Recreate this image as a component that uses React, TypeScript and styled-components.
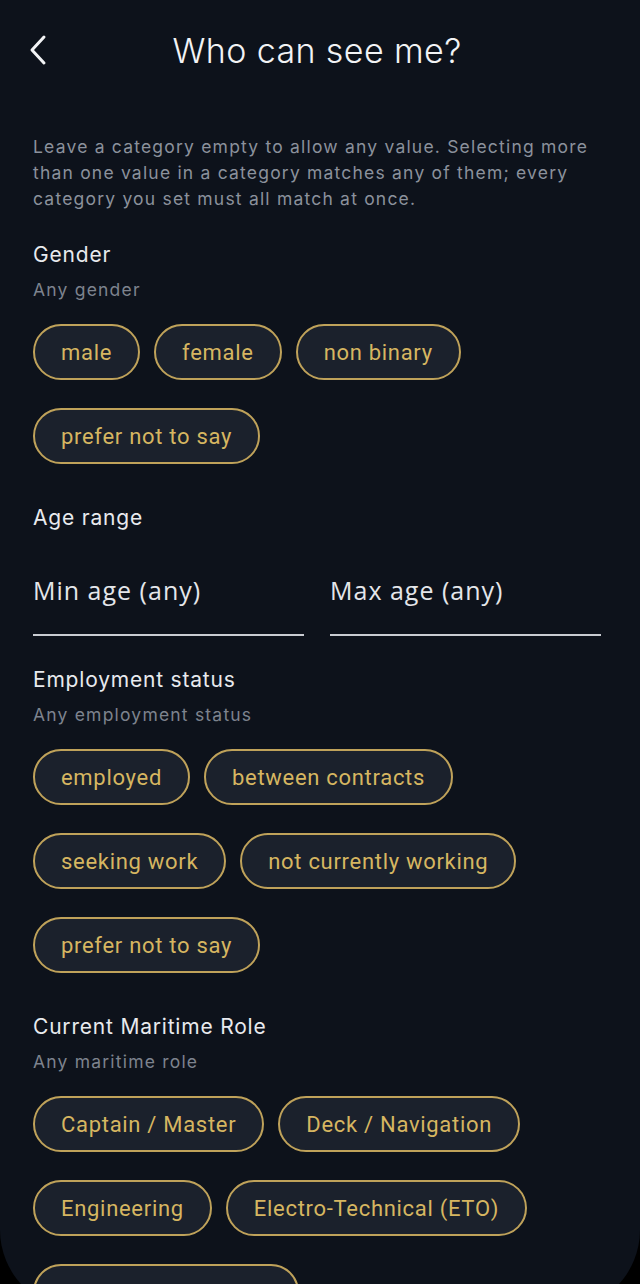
import styled, { createGlobalStyle } from 'styled-components';

const GlobalStyle = createGlobalStyle`
  html, body {
    margin: 0;
    padding: 0;
    background: #000;
    height: 1284px;
    overflow: hidden;
  }
  * { box-sizing: border-box; }
`;

const genders = ['male', 'female', 'non binary', 'prefer not to say'];
const employment = ['employed', 'between contracts', 'seeking work', 'not currently working', 'prefer not to say'];
const roles = ['Captain / Master', 'Deck / Navigation', 'Engineering', 'Electro-Technical (ETO)', 'Interior / Hospitality'];

export default function App() {
  return (
    <>
      <GlobalStyle />
      <Screen>
        <Header>
          <BackButton aria-label="Back">
            <svg width="20" height="32" viewBox="0 0 20 32" fill="none">
              <polyline points="16,3 4,16 16,29" stroke="#f2f3f5" strokeWidth="3" strokeLinecap="round" strokeLinejoin="round" />
            </svg>
          </BackButton>
          <Title>Who can see me?</Title>
        </Header>

        <Content>
          <Intro>
            Leave a category empty to allow any value. Selecting more than one value in a category
            matches any of them; every category you set must all match at once.
          </Intro>

          <Section>
            <Heading>Gender</Heading>
            <Hint>Any gender</Hint>
            <ChipWrap>
              {genders.map(g => <Chip key={g}>{g}</Chip>)}
            </ChipWrap>
          </Section>

          <Section>
            <Heading>Age range</Heading>
            <AgeRow>
              <AgeInput placeholder="Min age (any)" />
              <AgeInput placeholder="Max age (any)" />
            </AgeRow>
          </Section>

          <Section $tight>
            <Heading>Employment status</Heading>
            <Hint>Any employment status</Hint>
            <ChipWrap>
              {employment.map(e => <Chip key={e}>{e}</Chip>)}
            </ChipWrap>
          </Section>

          <Section>
            <Heading>Current Maritime Role</Heading>
            <Hint>Any maritime role</Hint>
            <ChipWrap>
              {roles.map(r => <Chip key={r}>{r}</Chip>)}
            </ChipWrap>
          </Section>
        </Content>
      </Screen>
    </>
  );
}

const Screen = styled.div`
  width: 640px;
  height: 1310px;
  background: #0d121b;
  border-radius: 0 0 80px 80px;
  overflow: hidden;
  font-family: Inter, "Noto Sans", sans-serif;
  color: #eceef1;
`;

const Header = styled.header`
  position: relative;
  height: 100px;
  display: flex;
  align-items: center;
  justify-content: center;
`;

const BackButton = styled.button`
  position: absolute;
  left: 28px;
  top: 34px;
  background: none;
  border: none;
  padding: 0;
  display: flex;
`;

const Title = styled.h1`
  margin: 0 0 0 -6px;
  font-size: 34px;
  font-weight: 300;
  color: #f2f3f5;
  letter-spacing: 0.4px;
`;

const Content = styled.main`
  padding: 34px 39px 0 33px;
`;

const Intro = styled.p`
  margin: 0;
  font-size: 17.5px;
  line-height: 26px;
  letter-spacing: 1.2px;
  color: #8b919c;
`;

const Section = styled.section<{ $tight?: boolean }>`
  margin-top: ${p => (p.$tight ? '30px' : '29px')};
`;

const Heading = styled.h2`
  margin: 0;
  font-size: 21px;
  line-height: 28px;
  font-weight: 400;
  letter-spacing: 0.8px;
  color: #e8eaee;
`;

const Hint = styled.div`
  margin-top: 10px;
  font-size: 17.5px;
  line-height: 22px;
  letter-spacing: 1.2px;
  color: #7d838e;
`;

const ChipWrap = styled.div`
  display: flex;
  flex-wrap: wrap;
  column-gap: 14px;
  row-gap: 28px;
  margin-top: 23px;
  padding-bottom: 11px;
`;

const Chip = styled.button`
  height: 56px;
  padding: 0 26px;
  border-radius: 28px;
  border: 2px solid #bfa25a;
  background: #1b212c;
  color: #d6b661;
  font-family: Roboto, "Noto Sans", sans-serif;
  font-size: 22px;
  letter-spacing: 0.7px;
`;

const AgeRow = styled.div`
  display: grid;
  grid-template-columns: 1fr 1fr;
  column-gap: 26px;
  margin-top: 33px;
`;

const AgeInput = styled.input`
  width: 100%;
  background: transparent;
  border: none;
  border-bottom: 2px solid #c9ccd2;
  padding: 8px 0 27px 0;
  font-family: "Open Sans", sans-serif;
  font-size: 25px;
  letter-spacing: 1px;
  color: #eceef1;
  outline: none;

  &::placeholder {
    color: #e4e6ea;
  }
`;
